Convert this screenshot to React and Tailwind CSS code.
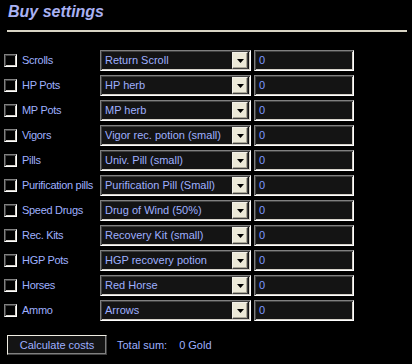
import React from "react";

const rows = [
  ["Scrolls", "Return Scroll"],
  ["HP Pots", "HP herb"],
  ["MP Pots", "MP herb"],
  ["Vigors", "Vigor rec. potion (small)"],
  ["Pills", "Univ. Pill (small)"],
  ["Purification pills", "Purification Pill (Small)"],
  ["Speed Drugs", "Drug of Wind (50%)"],
  ["Rec. Kits", "Recovery Kit (small)"],
  ["HGP Pots", "HGP recovery potion"],
  ["Horses", "Red Horse"],
  ["Ammo", "Arrows"],
];

function Row({ label, item }) {
  return (
    <div className="flex items-center h-[21px] mb-[4px]">
      <div className="ml-[4px] w-[13px] h-[13px] border border-t-[#808080] border-l-[#808080] border-b-white border-r-white shadow-[inset_1px_1px_#404040,inset_-1px_-1px_#d4d0c8] bg-black shrink-0" />
      <div className="ml-[5px] w-[78px] shrink-0 text-[#9fb0ff] text-[11px] tracking-[-0.3px] leading-none whitespace-nowrap">{label}</div>
      <div className="w-[151px] h-[21px] shrink-0 flex items-center border border-t-[#808080] border-l-[#808080] border-b-white border-r-white shadow-[inset_1px_1px_#404040,inset_-1px_-1px_#d4d0c8] bg-[#141414] p-[2px]">
        <div className="flex-1 pl-[2px] text-[#9fb0ff] text-[11px] leading-none whitespace-nowrap overflow-hidden">{item}</div>
        <div className="w-[16px] h-[17px] bg-[#ece9d8] border border-t-[#f4f2ea] border-l-[#f4f2ea] border-b-[#404040] border-r-[#404040] shadow-[inset_-1px_-1px_#aca899] flex items-center justify-center">
          <svg width="7" height="4" viewBox="0 0 7 4"><path d="M0 0H7L3.5 4Z" fill="#000" /></svg>
        </div>
      </div>
      <div className="ml-[3px] w-[100px] h-[21px] shrink-0 flex items-center border border-t-[#808080] border-l-[#808080] border-b-white border-r-white shadow-[inset_1px_1px_#404040,inset_-1px_-1px_#d4d0c8] bg-[#141414] pl-[4px] text-[#7d9bff] text-[11px] leading-none">0</div>
    </div>
  );
}

export default function App() {
  return (
    <div className="w-[412px] h-[364px] bg-black font-['Liberation_Sans',Arial,sans-serif] overflow-hidden">
      <div className="h-[30px] pl-[8px] pt-[2px] text-[16px] font-bold italic text-[#a9b1f2] leading-[20px]">Buy settings</div>
      <div className="ml-[7px] w-[400px] h-[2px] bg-[#d8d4c4]" />
      <div className="mt-[18px]">
        {rows.map(([l, i]) => (
          <Row key={l} label={l} item={i} />
        ))}
      </div>
      <div className="mt-[14px] flex items-center">
        <div className="ml-[7px] w-[100px] h-[20px] flex items-center justify-center bg-[#141414] border border-t-[#f0eee4] border-l-[#f0eee4] border-b-[#404040] border-r-[#404040] shadow-[inset_-1px_-1px_#808080] text-[#9fb0ff] text-[11px] leading-none">
          Calculate costs
        </div>
        <div className="ml-[10px] text-[#9fb0ff] text-[11px] leading-none">Total sum:</div>
        <div className="ml-[12px] text-[#9fb0ff] text-[11px] leading-none">0 Gold</div>
      </div>
    </div>
  );
}
